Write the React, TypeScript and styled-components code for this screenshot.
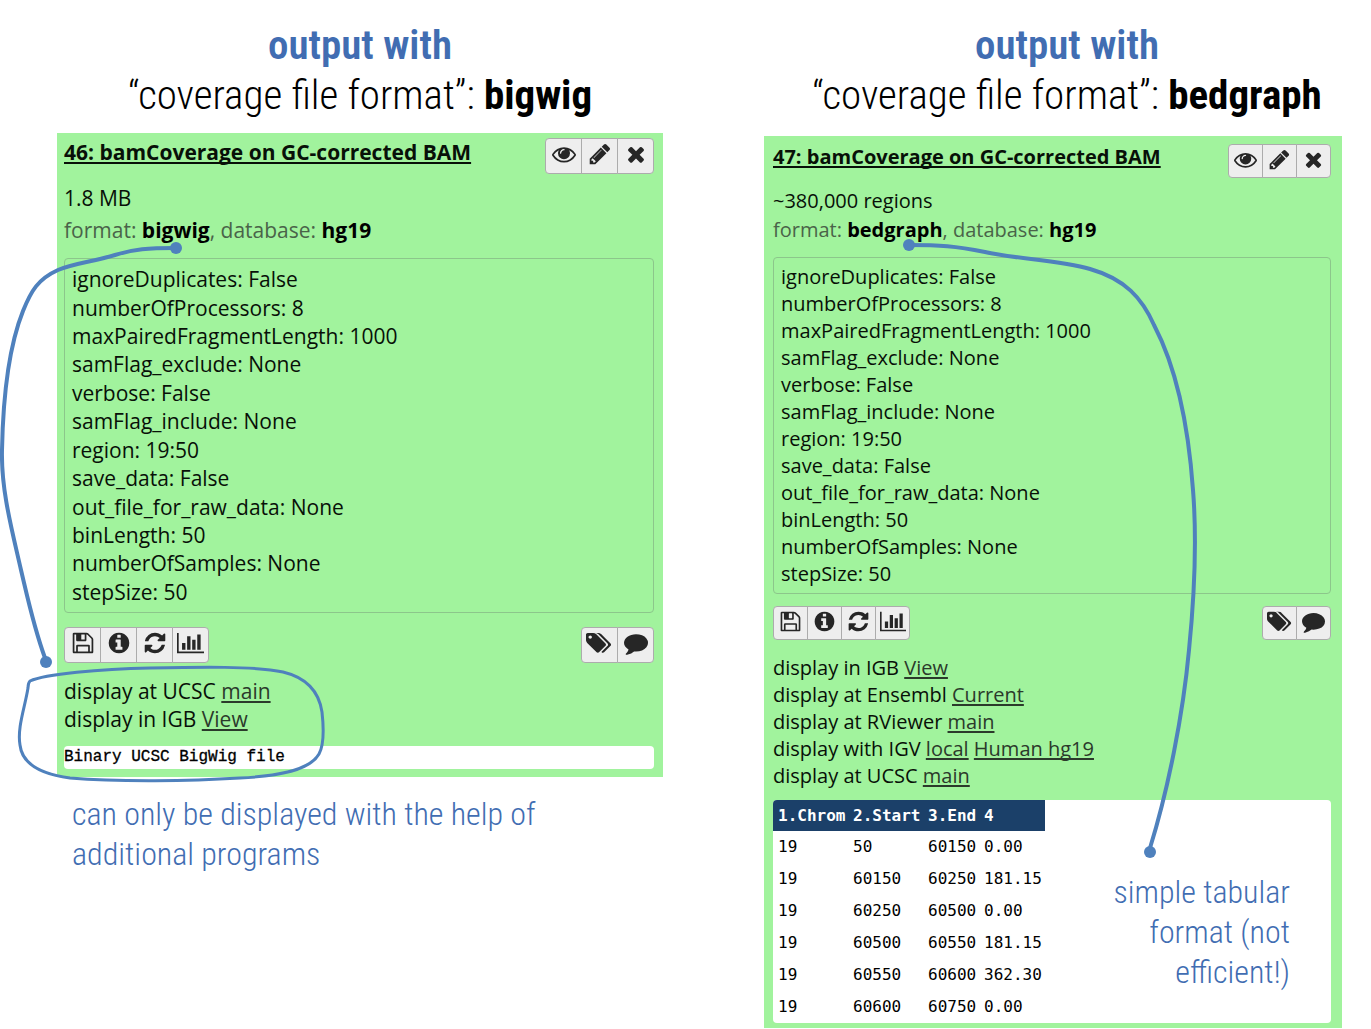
import React from "react";
import styled, { createGlobalStyle, css } from "styled-components";

type Size = "large" | "small";

const metrics = {
  large: {
    padding: "5px 9px 8px 7px",
    font: 21,
    button: 37,
    buttonHeight: 36,
    titleLine: 28,
    metaLine: 32,
    linkLine: 28,
    boxHeight: 355,
    boxGap: 12,
    toolsGap: 14,
    previewGap: 13,
  },
  small: {
    padding: "8px 11px 5px 9px",
    font: 20,
    button: 35,
    buttonHeight: 34,
    titleLine: 26,
    metaLine: 29,
    linkLine: 27,
    boxHeight: 337,
    boxGap: 13,
    toolsGap: 12,
    previewGap: 11,
  },
};

const colors = {
  ok: "#a1f39d",
  ink: "#081008",
  muted: "#4a6349",
  line: "#4f81bd",
  note: "#416db2",
  header: "#1b4069",
};

const handFont = css`
  font-family: "Roboto Condensed", Roboto, "Liberation Sans", sans-serif;
`;

const GlobalStyle = createGlobalStyle`
  *, *::before, *::after { box-sizing: border-box; }
  body {
    margin: 0;
    background: #fff;
    overflow-x: hidden;
    font-family: "Open Sans", "Noto Sans", sans-serif;
    color: ${colors.ink};
  }
  p, h1, h2, ul, figure { margin: 0; padding: 0; }
  ul { list-style: none; }
`;

const Page = styled.main`
  display: grid;
  grid-template-columns: minmax(0, 606fr) minmax(0, 578fr);
  column-gap: 101px;
  align-items: start;
  padding: 20px 29px 0 57px;
`;

const Column = styled.section`
  position: relative;
`;

const Heading = styled.h1<{ $size: Size }>`
  ${handFont}
  display: flex;
  flex-direction: column;
  align-items: center;
  margin-bottom: ${(p) => (p.$size === "large" ? 13 : 16)}px;
  padding-left: ${(p) => (p.$size === "large" ? 0 : 28)}px;
  font-size: 41px;
  font-weight: 300;
  line-height: 50px;
  white-space: nowrap;
  color: #000;

  strong {
    font-weight: 700;
  }
`;

const HeadingLead = styled.span`
  font-weight: 600;
  color: ${colors.note};
`;

const Card = styled.article<{ $size: Size }>`
  padding: ${(p) => metrics[p.$size].padding};
  background: ${colors.ok};
  font-size: ${(p) => metrics[p.$size].font}px;
`;

const CardHeader = styled.header`
  display: flex;
  justify-content: space-between;
  align-items: flex-start;
  margin-bottom: 8px;
`;

const Title = styled.h2<{ $size: Size }>`
  font-size: inherit;
  font-weight: 700;
  line-height: ${(p) => metrics[p.$size].titleLine}px;
`;

const TextLink = styled.a`
  color: #2b3a2b;
  text-decoration: underline;
  text-decoration-thickness: 2px;
  text-underline-offset: 2px;
  text-decoration-skip-ink: none;
`;

const TitleLink = styled(TextLink)`
  color: ${colors.ink};
`;

const ButtonGroup = styled.div`
  display: flex;
`;

const IconButton = styled.button<{ $size: Size }>`
  display: flex;
  align-items: center;
  justify-content: center;
  width: ${(p) => metrics[p.$size].button}px;
  height: ${(p) => metrics[p.$size].buttonHeight}px;
  padding: 0 0 4px;
  border: 1px solid #acacac;
  background: #eee;
  color: #262626;

  & + & {
    margin-left: -1px;
  }
  &:first-child {
    border-radius: 4px 0 0 4px;
  }
  &:last-child {
    border-radius: 0 4px 4px 0;
  }
`;

const Meta = styled.p<{ $size: Size; $muted?: boolean }>`
  line-height: ${(p) => metrics[p.$size].metaLine}px;
  color: ${(p) => (p.$muted ? colors.muted : colors.ink)};

  strong {
    color: #000;
  }
`;

const ParameterList = styled.ul<{ $size: Size }>`
  display: grid;
  grid-auto-rows: 1fr;
  align-items: center;
  min-height: ${(p) => metrics[p.$size].boxHeight}px;
  margin-top: ${(p) => metrics[p.$size].boxGap}px;
  padding: 6px 7px;
  border: 1px solid #8cc68b;
  border-radius: 4px;
  line-height: 26px;
`;

const Tools = styled.div<{ $size: Size }>`
  display: flex;
  justify-content: space-between;
  margin: ${(p) => metrics[p.$size].toolsGap}px 0 14px;
`;

const DisplayList = styled.ul<{ $size: Size }>`
  line-height: ${(p) => metrics[p.$size].linkLine}px;
`;

const Preview = styled.div<{ $size: Size }>`
  margin-top: ${(p) => metrics[p.$size].previewGap}px;
  border-radius: 4px;
  background: #fff;
  overflow: hidden;
`;

const Peek = styled.pre`
  margin: 0;
  font: 16px/23px "Liberation Mono", monospace;
  color: #000;
  -webkit-text-stroke: 0.3px currentColor;
`;

const DataTable = styled.table`
  border-collapse: collapse;
  table-layout: fixed;
  width: 272px;
  font: 16px/20px "DejaVu Sans Mono", monospace;
  text-align: left;
  color: #000;

  th,
  td {
    height: 32px;
    padding: 0 0 0 5px;
    white-space: nowrap;
  }
  th {
    height: 31px;
    background: ${colors.header};
    color: #fff;
  }
`;

const Col = styled.col<{ $width: number }>`
  width: ${(p) => p.$width}px;
`;

const Caption = styled.p`
  ${handFont}
  max-width: 520px;
  margin: 17px 0 0 15px;
  font-size: 32px;
  font-weight: 300;
  line-height: 40px;
  color: ${colors.note};
`;

const Annotation = styled(Caption)`
  position: absolute;
  right: 52px;
  bottom: 36px;
  width: 190px;
  margin: 0;
  text-align: right;
`;

const Connector = styled.svg<{ $left: number }>`
  position: absolute;
  top: -20px;
  left: ${(p) => p.$left}px;
  overflow: visible;
  pointer-events: none;
  fill: none;
  stroke: ${colors.line};
  stroke-linecap: round;

  circle {
    fill: ${colors.line};
    stroke: none;
  }
`;

const icons = {
  eye: {
    width: 1792,
    d: "M1664 960q-152-236-381-353 61 104 61 225 0 185-131.5 316.5t-316.5 131.5-316.5-131.5-131.5-316.5q0-121 61-225-229 117-381 353 133 205 333.5 326.5t434.5 121.5 434.5-121.5 333.5-326.5zm-720-384q0-20-14-34t-34-14q-125 0-214.5 89.5t-89.5 214.5q0 20 14 34t34 14 34-14 14-34q0-86 61-147t147-61q20 0 34-14t14-34zm848 384q0 34-20 69-140 230-376.5 368.5t-499.5 138.5-499.5-139-376.5-368q-20-35-20-69t20-69q140-229 376.5-368t499.5-139 499.5 139 376.5 368q20 35 20 69z",
  },
  pencil: {
    width: 1792,
    d: "M491 1536l91-91-235-235-91 91v107h128v128h107zm523-928q0-22-22-22-10 0-17 7l-542 542q-7 7-7 17 0 22 22 22 10 0 17-7l542-542q7-7 7-17zm-54-192l416 416-832 832h-416v-416zm683 96q0 53-37 90l-166 166-416-416 166-165q36-38 90-38 53 0 91 38l235 234q37 39 37 91z",
  },
  times: {
    width: 1792,
    d: "M1490 1322q0 40-28 68l-136 136q-28 28-68 28t-68-28l-294-294-294 294q-28 28-68 28t-68-28l-136-136q-28-28-28-68t28-68l294-294-294-294q-28-28-28-68t28-68l136-136q28-28 68-28t68 28l294 294 294-294q28-28 68-28t68 28l136 136q28 28 28 68t-28 68l-294 294 294 294q28 28 28 68z",
  },
  save: {
    width: 1792,
    d: "M512 1536h768v-384h-768v384zm896 0h128v-896q0-14-10-38.5t-20-34.5l-281-281q-10-10-34-20t-39-10v416q0 40-28 68t-68 28h-576q-40 0-68-28t-28-68v-416h-128v1280h128v-416q0-40 28-68t68-28h832q40 0 68 28t28 68v416zm-384-928v-320q0-13-9.5-22.5t-22.5-9.5h-192q-13 0-22.5 9.5t-9.5 22.5v320q0 13 9.5 22.5t22.5 9.5h192q13 0 22.5-9.5t9.5-22.5zm640 32v928q0 40-28 68t-68 28h-1344q-40 0-68-28t-28-68v-1344q0-40 28-68t68-28h928q40 0 88 20t76 48l280 280q28 28 48 76t20 88z",
  },
  info: {
    width: 1792,
    d: "M1152 1376v-160q0-14-9-23t-23-9h-96v-512q0-14-9-23t-23-9h-320q-14 0-23 9t-9 23v160q0 14 9 23t23 9h96v320h-96q-14 0-23 9t-9 23v160q0 14 9 23t23 9h448q14 0 23-9t9-23zm-128-896v-160q0-14-9-23t-23-9h-192q-14 0-23 9t-9 23v160q0 14 9 23t23 9h192q14 0 23-9t9-23zm640 416q0 209-103 385.5t-279.5 279.5-385.5 103-385.5-103-279.5-279.5-103-385.5 103-385.5 279.5-279.5 385.5-103 385.5 103 279.5 279.5 103 385.5z",
  },
  refresh: {
    width: 1792,
    d: "M1639 1056q0 5-1 7-64 268-268 434.5t-478 166.5q-146 0-282.5-55t-243.5-157l-129 129q-19 19-45 19t-45-19-19-45v-448q0-26 19-45t45-19h448q26 0 45 19t19 45-19 45l-137 137q71 66 161 102t187 36q134 0 250-65t186-179q11-17 53-117 8-23 30-23h192q13 0 22.5 9.5t9.5 22.5zm25-800v448q0 26-19 45t-45 19h-448q-26 0-45-19t-19-45 19-45l138-138q-148-137-349-137-134 0-250 65t-186 179q-11 17-53 117-8 23-30 23h-199q-13 0-22.5-9.5t-9.5-22.5v-7q65-268 270-434.5t480-166.5q146 0 284 55.5t245 156.5l130-129q19-19 45-19t45 19 19 45z",
  },
  chart: {
    width: 2048,
    d: "M640 896v512h-256v-512h256zm384-512v1024h-256v-1024h256zm1024 1152v128h-2048v-1536h128v1408h1920zm-640-896v768h-256v-768h256zm384-384v1152h-256v-1152h256z",
  },
  tags: {
    width: 2048,
    d: "M448 448q0-53-37.5-90.5t-90.5-37.5-90.5 37.5-37.5 90.5 37.5 90.5 90.5 37.5 90.5-37.5 37.5-90.5zm1067 576q0 53-37 90l-491 492q-39 37-91 37-53 0-90-37l-715-716q-38-37-64.5-101t-26.5-117v-416q0-52 38-90t90-38h416q53 0 117 26.5t102 64.5l715 714q37 39 37 91zm384 0q0 53-37 90l-491 492q-39 37-91 37-36 0-59-14t-53-45l470-470q37-37 37-90 0-52-37-91l-715-714q-38-38-102-64.5t-117-26.5h224q53 0 117 26.5t102 64.5l715 714q37 39 37 91z",
  },
  comment: {
    width: 1792,
    d: "M1792 896q0 174-120 321.5t-326 233-450 85.5q-70 0-145-8-198 175-460 225-49 14-114 22-17 2-30.5-9t-17.5-29v-1q-3-4-.5-12t2-10 4.5-9.5l6-9 7-8.5 8-9q7-8 31-34.5t34.5-38 31-39.5 32.5-51 27-59 26-76q-157-89-247.5-220t-90.5-281q0-130 71-248.5t191-204.5 286-136.5 348-50.5q244 0 450 85.5t326 233 120 321.5z",
  },
};

type IconName = keyof typeof icons;

function Icon({ name, size }: { name: IconName; size: Size }) {
  const { width, d } = icons[name];
  const height = size === "large" ? 24 : 23;
  return (
    <svg
      viewBox={`0 0 ${width} 1792`}
      width={Math.round((height * width) / 1792)}
      height={height}
      fill="currentColor"
      aria-hidden="true"
    >
      <path d={d} />
    </svg>
  );
}

function Buttons({ size, items }: { size: Size; items: [IconName, string][] }) {
  return (
    <ButtonGroup>
      {items.map(([name, label]) => (
        <IconButton key={name} type="button" $size={size} aria-label={label}>
          <Icon name={name} size={size} />
        </IconButton>
      ))}
    </ButtonGroup>
  );
}

const parameters = [
  "ignoreDuplicates: False",
  "numberOfProcessors: 8",
  "maxPairedFragmentLength: 1000",
  "samFlag_exclude: None",
  "verbose: False",
  "samFlag_include: None",
  "region: 19:50",
  "save_data: False",
  "out_file_for_raw_data: None",
  "binLength: 50",
  "numberOfSamples: None",
  "stepSize: 50",
];

type DisplayApp = { label: string; links: string[] };

type DatasetProps = {
  size: Size;
  title: string;
  summary: string;
  format: string;
  apps: DisplayApp[];
  children: React.ReactNode;
};

function Dataset({ size, title, summary, format, apps, children }: DatasetProps) {
  return (
    <Card $size={size}>
      <CardHeader>
        <Title $size={size}>
          <TitleLink href="#dataset">{title}</TitleLink>
        </Title>
        <Buttons
          size={size}
          items={[
            ["eye", "View data"],
            ["pencil", "Edit attributes"],
            ["times", "Delete"],
          ]}
        />
      </CardHeader>
      <Meta $size={size}>{summary}</Meta>
      <Meta $size={size} $muted>
        format: <strong>{format}</strong>, database: <strong>hg19</strong>
      </Meta>
      <ParameterList $size={size}>
        {parameters.map((text) => (
          <li key={text}>{text}</li>
        ))}
      </ParameterList>
      <Tools $size={size}>
        <Buttons
          size={size}
          items={[
            ["save", "Download"],
            ["info", "View details"],
            ["refresh", "Run this job again"],
            ["chart", "Visualize"],
          ]}
        />
        <Buttons
          size={size}
          items={[
            ["tags", "Edit tags"],
            ["comment", "Edit annotation"],
          ]}
        />
      </Tools>
      <DisplayList $size={size}>
        {apps.map(({ label, links }) => (
          <li key={label}>
            {label}
            {links.map((link) => (
              <React.Fragment key={link}>
                {" "}
                <TextLink href="#display">{link}</TextLink>
              </React.Fragment>
            ))}
          </li>
        ))}
      </DisplayList>
      <Preview $size={size}>{children}</Preview>
    </Card>
  );
}

const rows = [
  ["19", "50", "60150", "0.00"],
  ["19", "60150", "60250", "181.15"],
  ["19", "60250", "60500", "0.00"],
  ["19", "60500", "60550", "181.15"],
  ["19", "60550", "60600", "362.30"],
  ["19", "60600", "60750", "0.00"],
];

export default function App() {
  return (
    <>
      <GlobalStyle />
      <Page>
        <Column>
          <Heading $size="large">
            <HeadingLead>output with</HeadingLead>
            <span>
              “coverage file format”: <strong>bigwig</strong>
            </span>
          </Heading>
          <Dataset
            size="large"
            title="46: bamCoverage on GC-corrected BAM"
            summary="1.8 MB"
            format="bigwig"
            apps={[
              { label: "display at UCSC", links: ["main"] },
              { label: "display in IGB", links: ["View"] },
            ]}
          >
            <Peek>Binary UCSC BigWig file</Peek>
          </Dataset>
          <Caption>can only be displayed with the help of additional programs</Caption>
          <Connector $left={-57} width="340" height="800" aria-hidden="true">
            <path
              strokeWidth="4"
              d="M176 248C148 248 134 249 115 255C92 262 75 263 58 270C38 279 31 291 23 311C9 346 3 400 2 450C1 490 12 530 21 570C29 604 34 628 45 658"
            />
            <circle cx="176" cy="248" r="6" />
            <circle cx="46" cy="662" r="6" />
            <path
              strokeWidth="3"
              d="M30 681C45 674 100 669 150 668C200 667 255 666 283 672C308 678 319 692 322 712C324 730 324 745 319 754C310 770 280 776 240 778C190 781 120 782 70 778C40 774 22 763 20 745C17 728 25 707 28 688C28 684 29 682 30 681Z"
            />
          </Connector>
        </Column>
        <Column>
          <Heading $size="small">
            <HeadingLead>output with</HeadingLead>
            <span>
              “coverage file format”: <strong>bedgraph</strong>
            </span>
          </Heading>
          <Dataset
            size="small"
            title="47: bamCoverage on GC-corrected BAM"
            summary="~380,000 regions"
            format="bedgraph"
            apps={[
              { label: "display in IGB", links: ["View"] },
              { label: "display at Ensembl", links: ["Current"] },
              { label: "display at RViewer", links: ["main"] },
              { label: "display with IGV", links: ["local", "Human hg19"] },
              { label: "display at UCSC", links: ["main"] },
            ]}
          >
            <DataTable>
              <colgroup>
                <Col $width={75} />
                <Col $width={75} />
                <Col $width={56} />
                <Col $width={66} />
              </colgroup>
              <thead>
                <tr>
                  <th scope="col">1.Chrom</th>
                  <th scope="col">2.Start</th>
                  <th scope="col">3.End</th>
                  <th scope="col">4</th>
                </tr>
              </thead>
              <tbody>
                {rows.map((row) => (
                  <tr key={row[1]}>
                    {row.map((cell, i) => (
                      <td key={i}>{cell}</td>
                    ))}
                  </tr>
                ))}
              </tbody>
            </DataTable>
          </Dataset>
          <Annotation>simple tabular format (not efficient!)</Annotation>
          <Connector $left={-764} width="1340" height="870" aria-hidden="true">
            <path
              strokeWidth="4"
              d="M909 245C940 245 955 246 985 252C1015 259 1060 260 1090 269C1125 279 1142 298 1154 325C1175 365 1188 420 1193 490C1197 540 1194 600 1189 650C1183 715 1168 790 1150 848"
            />
            <circle cx="909" cy="245" r="6" />
            <circle cx="1150" cy="852" r="6" />
          </Connector>
        </Column>
      </Page>
    </>
  );
}
